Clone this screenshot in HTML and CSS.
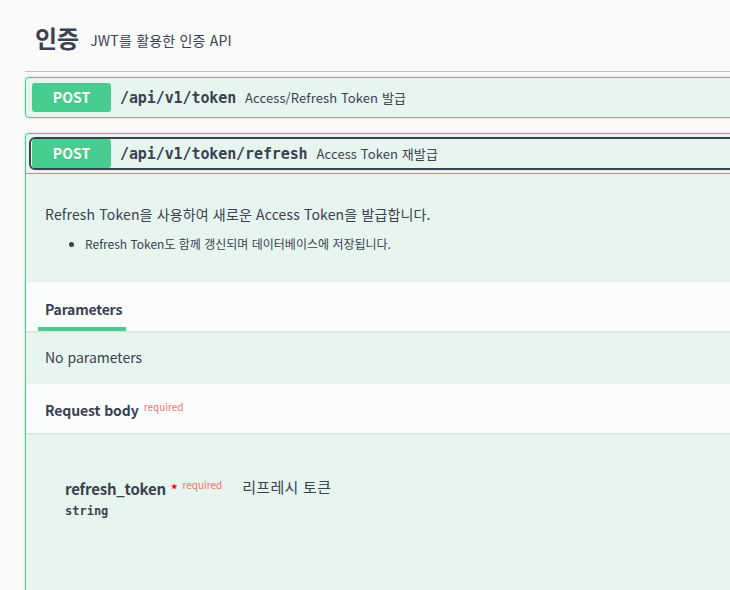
FILE: index.html
```html
<!DOCTYPE html>
<html lang="ko">
<head>
<meta charset="utf-8">
<title>인증</title>
<link rel="stylesheet" href="styles.css">
</head>
<body>
<div class="page">
  <section class="tag">
    <h3 class="tag-head"><span class="tag-name">인증</span><small class="tag-desc">JWT를 활용한 인증 API</small></h3>

    <div class="opblock">
      <div class="summary">
        <div class="control">
          <span class="method">POST</span>
          <span class="path">/api/v1/token</span>
          <span class="summary-desc">Access/Refresh Token 발급</span>
        </div>
      </div>
    </div>

    <div class="opblock open">
      <div class="summary">
        <div class="control focused">
          <span class="method">POST</span>
          <span class="path">/api/v1/token/refresh</span>
          <span class="summary-desc">Access Token 재발급</span>
        </div>
      </div>
      <div class="op-body">
        <div class="desc">
          <p>Refresh Token을 사용하여 새로운 Access Token을 발급합니다.</p>
          <ul>
            <li>Refresh Token도 함께 갱신되며 데이터베이스에 저장됩니다.</li>
          </ul>
        </div>
        <div class="section-header">
          <div class="tab"><span>Parameters</span></div>
        </div>
        <div class="no-params">No parameters</div>
        <div class="section-header rb-header">
          <h4 class="rb-title">Request body</h4><span class="rb-req">required</span>
        </div>
        <div class="rb-body">
          <div class="param">
            <div class="param-name-col">
              <div class="pname">refresh_token <span class="star">*</span><span class="req-small">required</span></div>
              <div class="ptype">string</div>
            </div>
            <div class="pdesc">리프레시 토큰</div>
          </div>
        </div>
      </div>
    </div>
  </section>
</div>
</body>
</html>
```

FILE: styles.css
```css
html, body {
  margin: 0;
  padding: 0;
  background: #fafafa;
  overflow: hidden;
}
body {
  font-family: "Noto Sans CJK KR", sans-serif;
  color: #3b4151;
}
.page {
  width: 780px;
  padding: 0 0 0 25px;
}
.tag-head {
  margin: 0;
  height: 72px;
  box-sizing: border-box;
  padding: 5px 10px 0;
  display: flex;
  align-items: center;
  border-bottom: 1px solid rgba(59, 65, 81, 0.3);
  font-weight: 700;
}
.tag-name {
  font-size: 24px;
  line-height: 30px;
  font-weight: 700;
}
.tag-desc {
  font-size: 14px;
  font-weight: 400;
  margin-left: 11px;
  line-height: 20px;
  padding-top: 3px;
  letter-spacing: 0.2px;
}
.opblock {
  margin-top: 5px;
  border: 1px solid #49cc90;
  border-radius: 4px;
  background: rgba(73, 204, 144, 0.1);
  box-shadow: 0 0 3px rgba(0, 0, 0, 0.19);
}
.opblock.open {
  margin-top: 15px;
}
.summary {
  padding: 5px;
}
.open .summary {
  border-bottom: 1px solid #49cc90;
}
.control {
  display: flex;
  align-items: center;
  border-radius: 4px;
}
.control.focused {
  outline: 2px solid #3b4151;
  outline-offset: 0;
}
.method {
  display: block;
  width: 79px;
  box-sizing: border-box;
  padding: 6px 0;
  font-size: 14px;
  line-height: 17px;
  font-weight: 700;
  text-align: center;
  color: #fff;
  background: #49cc90;
  border-radius: 3px;
  margin-left: 1px;
  text-shadow: 0 1px 0 rgba(0, 0, 0, 0.1);
}
.path {
  font-family: "DejaVu Sans Mono", monospace;
  font-size: 15px;
  font-weight: 700;
  letter-spacing: -0.1px;
  padding: 0 9px 0 9px;
  color: #3b4151;
}
.summary-desc {
  font-size: 13px;
  color: #3b4151;
  letter-spacing: 0.1px;
}
.desc {
  padding: 15px 20px 15px 19px;
  margin-bottom: 5px;
}
.desc p {
  margin: 15px 0 0;
  font-size: 14px;
  line-height: 20px;
  letter-spacing: 0.15px;
}
.desc ul {
  margin: 11px 0 9px;
  padding-left: 40px;
  font-size: 12px;
  line-height: 18px;
}
.section-header {
  height: 49px;
  box-sizing: border-box;
  padding: 0 20px 0 19px;
  background: rgba(255, 255, 255, 0.8);
  box-shadow: 0 1px 2px rgba(0, 0, 0, 0.1);
  display: flex;
  align-items: flex-end;
}
.tab {
  margin-left: -7px;
  padding: 0 4px 8px 7px;
  border-bottom: 4px solid #49cc90;
  font-size: 14px;
  line-height: 20px;
  font-weight: 700;
  letter-spacing: -0.2px;
}
.no-params {
  height: 53px;
  display: flex;
  align-items: center;
  padding: 0 20px 0 19px;
  font-size: 14px;
  color: #3b4151;
  margin-top: -1px;
}
.rb-header {
  align-items: center;
  margin-top: 1px;
}
.rb-title {
  margin: 3px 0 0;
  font-size: 14px;
  line-height: 20px;
  font-weight: 700;
  letter-spacing: -0.1px;
}
.rb-req {
  align-self: flex-start;
  margin-top: 17px;
  margin-left: 5px;
  font-size: 10px;
  line-height: 12px;
  color: rgba(255, 0, 0, 0.6);
}
.rb-body {
  padding: 46px 40px 80px 39px;
}
.param {
  display: flex;
  align-items: flex-start;
}
.pname {
  font-size: 15px;
  line-height: 20px;
  font-weight: 700;
  letter-spacing: -0.2px;
  display: flex;
  align-items: flex-start;
}
.star {
  color: red;
  font-size: 13px;
  margin-left: 5px;
  line-height: 20px;
}
.req-small {
  font-size: 10px;
  line-height: 12px;
  color: rgba(255, 0, 0, 0.6);
  margin-left: 5px;
  margin-top: 0;
  font-weight: 400;
  letter-spacing: 0;
}
.ptype {
  margin-top: 4px;
  font-family: "DejaVu Sans Mono", monospace;
  font-size: 12px;
  line-height: 16px;
  font-weight: 700;
}
.pdesc {
  margin-left: 20px;
  font-size: 15px;
  line-height: 20px;
  margin-top: -2px;
  letter-spacing: 0.3px;
}
```
